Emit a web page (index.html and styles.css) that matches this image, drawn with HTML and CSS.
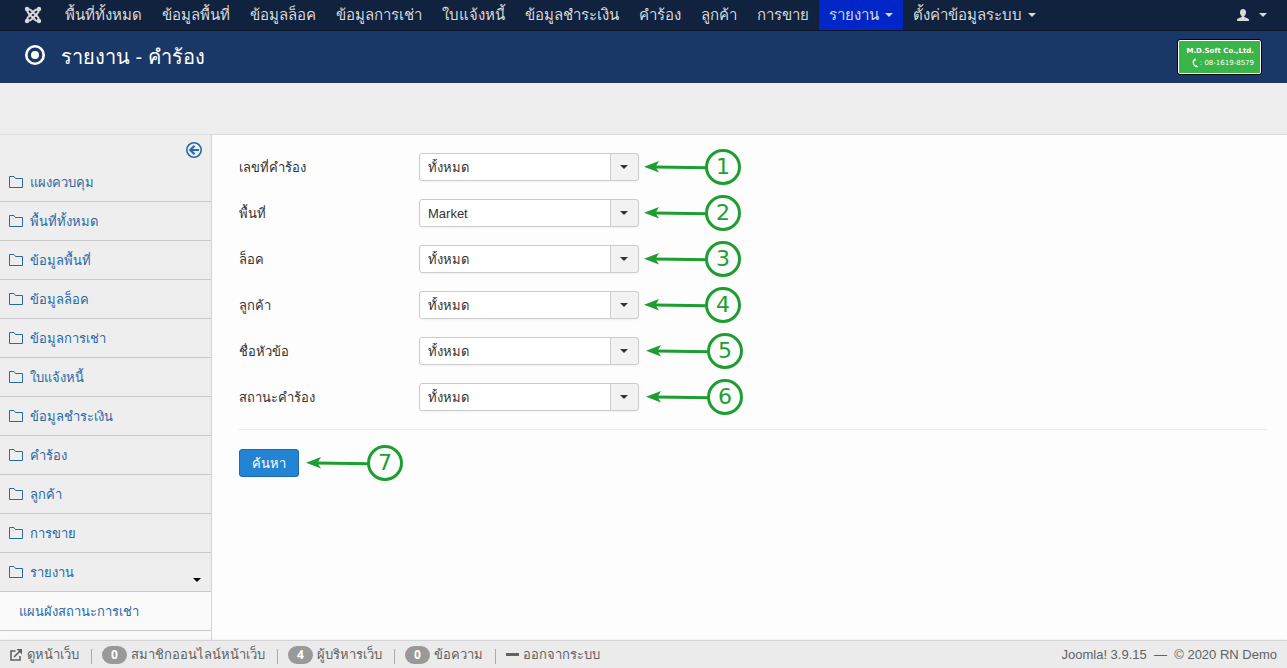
FILE: index.html
```html
<!DOCTYPE html>
<html lang="th">
<head>
<meta charset="utf-8">
<meta name="viewport" content="width=device-width, initial-scale=1">
<title>รายงาน - คำร้อง</title>
<link rel="stylesheet" href="styles.css">
</head>
<body>
<svg class="defs" aria-hidden="true">
  <symbol id="folder" viewBox="0 0 14 12"><path d="M.5 11.5V.5H5L6.5 2.5H13.5V11.5Z" fill="none" stroke="currentColor"/></symbol>
  <symbol id="arrow" viewBox="0 0 64 12"><path d="M10 6L64 6.8" fill="none" stroke="currentColor" stroke-width="3"/><path d="M0 5.8L15 0L11.5 6L15 11.6Z" fill="currentColor"/></symbol>
</svg>

<nav class="navbar">
  <a class="brand" href="#" aria-label="Joomla">
    <svg width="18" height="18" viewBox="0 0 18 18" fill="none" stroke="currentColor" stroke-width="2">
      <path d="M3.200 3.200C3 5.500 3.800 6.800 5 8L10.800 13.500M14.800 3.200C12.500 3 11.200 3.800 10 5L4.500 10.800M14.800 14.800C15 12.500 14.200 11.200 13 10L7.200 4.500M3.200 14.800C5.500 15 6.800 14.200 8 13L13.500 7.200"/>
      <path d="M3.200 3.200C5.500 3 6.500 3.500 7.500 4.700M14.800 3.200C15 5.500 14.500 6.500 13.300 7.500M14.800 14.800C12.500 15 11.500 14.500 10.500 13.300M3.200 14.800C3 12.500 3.500 11.500 4.700 10.500"/>
      <g fill="currentColor" stroke="none"><circle cx="3" cy="3" r="2.200"/><circle cx="15" cy="3" r="2.200"/><circle cx="15" cy="15" r="2.200"/><circle cx="3" cy="15" r="2.200"/></g>
    </svg>
  </a>
  <ul class="nav">
    <li><a href="#">พื้นที่ทั้งหมด</a></li>
    <li><a href="#">ข้อมูลพื้นที่</a></li>
    <li><a href="#">ข้อมูลล็อค</a></li>
    <li><a href="#">ข้อมูลการเช่า</a></li>
    <li><a href="#">ใบแจ้งหนี้</a></li>
    <li><a href="#">ข้อมูลชำระเงิน</a></li>
    <li><a href="#">คำร้อง</a></li>
    <li><a href="#">ลูกค้า</a></li>
    <li><a href="#">การขาย</a></li>
    <li><a class="active" href="#">รายงาน<span class="caret"></span></a></li>
    <li><a href="#">ตั้งค่าข้อมูลระบบ<span class="caret"></span></a></li>
  </ul>
  <a class="user" href="#" aria-label="ผู้ใช้">
    <svg width="12" height="12" viewBox="0 0 12 12" fill="currentColor"><path d="M6 0C8 0 9 1.300 9 3.200C9 5 8.300 6.300 7.300 7V8L11 9.500C11.700 9.800 12 10.300 12 12H0C0 10.300.3 9.800 1 9.500L4.700 8V7C3.700 6.300 3 5 3 3.200C3 1.300 4 0 6 0Z"/></svg>
    <span class="caret"></span>
  </a>
</nav>

<header class="header">
  <h1 class="title">
    <svg width="20" height="20" viewBox="0 0 20 20"><circle cx="10" cy="10" r="8.700" fill="none" stroke="currentColor" stroke-width="2.600"/><circle cx="10" cy="10" r="4" fill="currentColor"/></svg>
    รายงาน - คำร้อง
  </h1>
  <div class="logo">
    <span class="logo-name">M.D.Soft Co.,Ltd.</span>
    <span class="logo-phone"><svg width="6" height="10" viewBox="0 0 6 10"><path d="M3 1C.5 3 .5 7 4.500 9M3 .5V3M4 7.500L5.500 9" fill="none" stroke="currentColor" stroke-width="1.200"/></svg>: 08-1619-8579</span>
  </div>
</header>
<div class="subhead"></div>

<div class="body">
  <aside class="sidebar">
    <button class="collapse" type="button" aria-label="ซ่อนเมนู">
      <svg width="16" height="16" viewBox="0 0 16 16" fill="none" stroke="currentColor"><circle cx="8" cy="8" r="7.200" stroke-width="1.600"/><path d="M13 8H4.500M8.500 3.800L4.300 8L8.500 12.200" stroke-width="2.200"/></svg>
    </button>
    <ul class="menu">
      <li><a href="#"><svg class="folder"><use href="#folder"/></svg>แผงควบคุม</a></li>
      <li><a href="#"><svg class="folder"><use href="#folder"/></svg>พื้นที่ทั้งหมด</a></li>
      <li><a href="#"><svg class="folder"><use href="#folder"/></svg>ข้อมูลพื้นที่</a></li>
      <li><a href="#"><svg class="folder"><use href="#folder"/></svg>ข้อมูลล็อค</a></li>
      <li><a href="#"><svg class="folder"><use href="#folder"/></svg>ข้อมูลการเช่า</a></li>
      <li><a href="#"><svg class="folder"><use href="#folder"/></svg>ใบแจ้งหนี้</a></li>
      <li><a href="#"><svg class="folder"><use href="#folder"/></svg>ข้อมูลชำระเงิน</a></li>
      <li><a href="#"><svg class="folder"><use href="#folder"/></svg>คำร้อง</a></li>
      <li><a href="#"><svg class="folder"><use href="#folder"/></svg>ลูกค้า</a></li>
      <li><a href="#"><svg class="folder"><use href="#folder"/></svg>การขาย</a></li>
      <li><a href="#"><svg class="folder"><use href="#folder"/></svg>รายงาน<span class="caret menu-caret"></span></a></li>
    </ul>
    <ul class="menu submenu">
      <li><a href="#">แผนผังสถานะการเช่า</a></li>
    </ul>
  </aside>

  <main class="main">
    <form class="form">
      <div class="row">
        <label for="f1">เลขที่คำร้อง</label>
        <div class="select"><select id="f1"><option>ทั้งหมด</option></select></div>
        <div class="note"><svg class="arrow"><use href="#arrow"/></svg><span class="num">1</span></div>
      </div>
      <div class="row">
        <label for="f2">พื้นที่</label>
        <div class="select"><select id="f2"><option>Market</option></select></div>
        <div class="note"><svg class="arrow"><use href="#arrow"/></svg><span class="num">2</span></div>
      </div>
      <div class="row">
        <label for="f3">ล็อค</label>
        <div class="select"><select id="f3"><option>ทั้งหมด</option></select></div>
        <div class="note"><svg class="arrow"><use href="#arrow"/></svg><span class="num">3</span></div>
      </div>
      <div class="row">
        <label for="f4">ลูกค้า</label>
        <div class="select"><select id="f4"><option>ทั้งหมด</option></select></div>
        <div class="note"><svg class="arrow"><use href="#arrow"/></svg><span class="num">4</span></div>
      </div>
      <div class="row">
        <label for="f5">ชื่อหัวข้อ</label>
        <div class="select"><select id="f5"><option>ทั้งหมด</option></select></div>
        <div class="note note-far"><svg class="arrow"><use href="#arrow"/></svg><span class="num">5</span></div>
      </div>
      <div class="row">
        <label for="f6">สถานะคำร้อง</label>
        <div class="select"><select id="f6"><option>ทั้งหมด</option></select></div>
        <div class="note note-far"><svg class="arrow"><use href="#arrow"/></svg><span class="num">6</span></div>
      </div>
      <div class="actions">
        <button class="search" type="button">ค้นหา</button>
        <div class="note note-far"><svg class="arrow"><use href="#arrow"/></svg><span class="num">7</span></div>
      </div>
    </form>
  </main>
</div>

<footer class="status">
  <ul class="status-list">
    <li><a href="#"><svg width="13" height="12" viewBox="0 0 13 12" fill="none" stroke="currentColor" stroke-width="1.600"><path d="M5.500 2H1V11H10V7M4 8L10 2"/><path d="M6.500 0H12V5.500Z" fill="currentColor" stroke="none"/></svg>ดูหน้าเว็บ</a></li>
    <li><span class="badge">0</span>สมาชิกออนไลน์หน้าเว็บ</li>
    <li><span class="badge">4</span>ผู้บริหารเว็บ</li>
    <li><a href="#"><span class="badge">0</span>ข้อความ</a></li>
    <li><a href="#"><span class="dash"></span>ออกจากระบบ</a></li>
  </ul>
  <p class="version">Joomla! 3.9.15 &nbsp;—&nbsp; © 2020 RN Demo</p>
</footer>
</body>
</html>
```
FILE: styles.css
```css
* { box-sizing: border-box; }
body {
  margin: 0;
  height: 100vh;
  display: flex;
  flex-direction: column;
  overflow: hidden;
  background: #fdfdfd;
  color: #333;
  font: 13px/18px "Liberation Sans", sans-serif;
}
ul { list-style: none; margin: 0; padding: 0; }
a { color: inherit; text-decoration: none; }
.defs { display: none; }
svg { flex: none; }

.caret {
  flex: none;
  width: 0;
  height: 0;
  border: 4px solid transparent;
  border-top-color: currentColor;
  border-bottom: 0;
}

.navbar {
  flex: none;
  height: 31px;
  display: flex;
  padding: 0 20px 0 24px;
  background: #10223e;
  border-bottom: 1px solid #0b1628;
  color: #d9d9d9;
}
.brand { display: flex; align-items: center; width: 31px; }
.nav { display: flex; flex: 1; font-size: 15px; }
.nav a {
  display: flex;
  align-items: center;
  gap: 6px;
  height: 30px;
  padding: 0 10px;
  white-space: nowrap;
}
.nav .active { background: #0026c7; }
.user { display: flex; align-items: center; gap: 10px; }

.header {
  flex: none;
  height: 52px;
  display: flex;
  align-items: center;
  justify-content: space-between;
  padding: 0 25px;
  background: #1a3867;
  color: #fff;
}
.title {
  display: flex;
  align-items: center;
  gap: 16px;
  margin: 0;
  font-size: 20px;
  font-weight: normal;
  line-height: 32px;
}
.title svg { margin-bottom: 4px; }
.logo {
  display: flex;
  flex-direction: column;
  align-items: flex-end;
  justify-content: center;
  gap: 2px;
  width: 85px;
  height: 36px;
  padding: 0 7px;
  border: 1px solid #000;
  border-radius: 3px;
  box-shadow: inset 0 0 0 1px #fff;
  background: #39b54a;
  line-height: 10px;
  white-space: nowrap;
}
.logo-name { font: bold 7px/10px "DejaVu Sans", sans-serif; }
.logo-phone { display: flex; gap: 2px; font: 7px/10px "DejaVu Sans", sans-serif; }
.subhead { flex: none; height: 52px; background: #eee; border-bottom: 1px solid #dcdcdc; }

.body { flex: 1; min-height: 0; display: flex; }
.sidebar {
  flex: none;
  width: 212px;
  display: flex;
  flex-direction: column;
  overflow: hidden;
  background: #eee;
  border-right: 1px solid #d3d3d3;
  color: #2a69a8;
}
.collapse {
  flex: none;
  align-self: flex-end;
  display: flex;
  margin: 7px 9px 5px 0;
  padding: 0;
  border: 0;
  background: none;
  color: inherit;
}
.menu { flex: none; }
.menu a {
  display: flex;
  align-items: center;
  gap: 7px;
  height: 39px;
  padding: 2px 10px 0 9px;
  border-bottom: 1px solid #c9c9c9;
}
.submenu { flex: 1 0 auto; background: #fafafa; }
.submenu a { padding-left: 19px; }
.folder { width: 14px; height: 12px; margin-bottom: 2px; }
.menu-caret { margin: 14px 0 0 auto; color: #000; }

.main { flex: 1; padding: 18px 20px 0 27px; }
.form { display: flex; flex-direction: column; gap: 18px; }
.row { display: flex; align-items: center; height: 28px; }
.row label { width: 180px; padding-top: 2px; }
.select { position: relative; width: 220px; height: 28px; }
.select select {
  appearance: none;
  width: 100%;
  height: 100%;
  padding: 2px 36px 0 8px;
  border: 1px solid #ccc;
  border-radius: 3px;
  background: linear-gradient(#ccc, #ccc) right 27px top / 1px 100% no-repeat,
    linear-gradient(#f2f2f2, #f2f2f2) right / 27px 100% no-repeat, #fff;
  box-shadow: 0 1px 2px rgba(0, 0, 0, .05);
  color: #333;
  font: inherit;
}
.select::after {
  content: "";
  position: absolute;
  top: 12px;
  right: 11px;
  border: 4px solid transparent;
  border-top-color: #333;
  border-bottom: 0;
  pointer-events: none;
}
.note { display: flex; align-items: center; margin-left: 5px; color: #1e9e31; }
.note-far { margin-left: 7px; }
.arrow { width: 64px; height: 12px; margin-right: -3px; }
.num {
  width: 36px;
  height: 36px;
  border: 3px solid;
  border-radius: 50%;
  font: 22px/30px "DejaVu Sans", sans-serif;
  text-align: center;
}
.actions {
  display: flex;
  align-items: center;
  height: 48px;
  padding-top: 19px;
  border-top: 1px solid #eaeaea;
}
.search {
  width: 60px;
  height: 28px;
  padding: 2px 0 0;
  border: 1px solid #1b6aab;
  border-radius: 3px;
  background: #2384d3;
  color: #fff;
  font: inherit;
}

.status {
  flex: none;
  height: 28px;
  display: flex;
  align-items: center;
  justify-content: space-between;
  padding: 0 10px;
  border-top: 1px solid #d4d4d4;
  background: #ebebeb;
  box-shadow: 0 0 3px rgba(0, 0, 0, .1);
  color: #626262;
}
.status-list { display: flex; align-items: center; }
.status-list li { display: flex; align-items: center; gap: 4px; }
.status-list li + li::before {
  content: "";
  width: 1px;
  height: 15px;
  margin: 3px 6px 0 12px;
  background: #aaa;
}
.status-list a { display: flex; align-items: center; gap: 4px; }
.badge {
  width: 25px;
  height: 18px;
  border-radius: 9px;
  background: #999;
  color: #fff;
  font: bold 12px/18px "Open Sans", sans-serif;
  text-align: center;
}
.dash { width: 13px; height: 3px; background: #626262; }
.version { margin: 0; }
```
